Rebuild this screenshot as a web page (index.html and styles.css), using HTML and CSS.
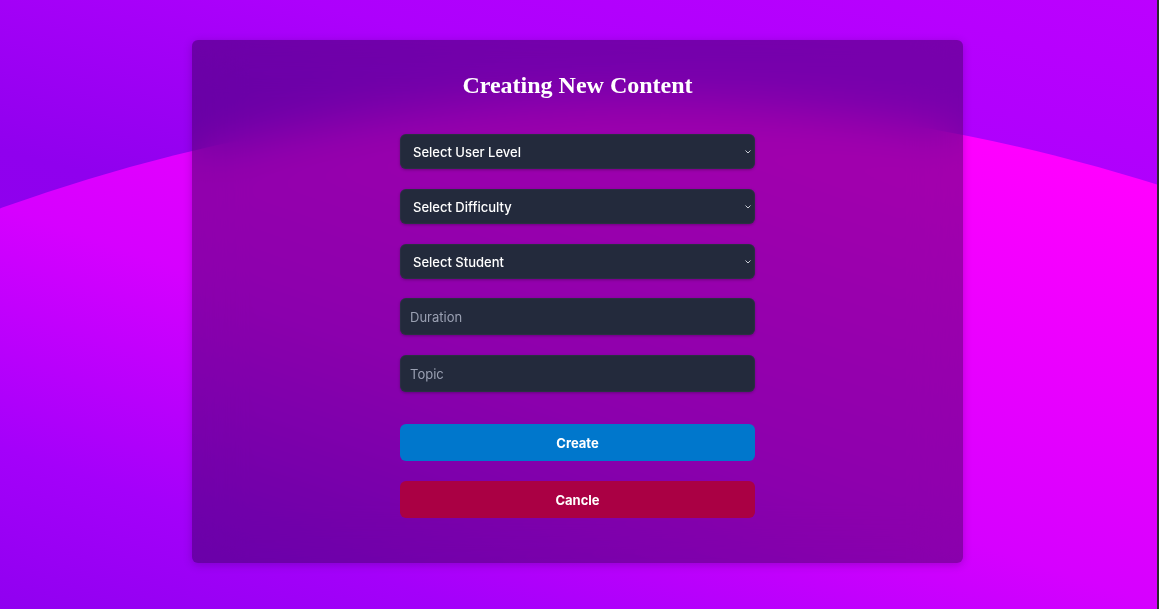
FILE: index.html
```html
<!DOCTYPE html>
<html lang="en">
<head>
<meta charset="utf-8">
<title>Creating New Content</title>
<link rel="stylesheet" href="styles.css">
</head>
<body>
<main class="page">
  <section class="card">
    <h1 class="title">Creating New Content</h1>
    <form class="form">
      <div class="select-wrap">
        <select class="field select"><option>Select User Level</option></select>
        <svg class="chev" width="8" height="6" viewBox="0 0 8 6"><path d="M1.5 1.5 L4 4 L6.5 1.5" fill="none" stroke="#c9ccd6" stroke-width="1"/></svg>
      </div>
      <div class="select-wrap">
        <select class="field select"><option>Select Difficulty</option></select>
        <svg class="chev" width="8" height="6" viewBox="0 0 8 6"><path d="M1.5 1.5 L4 4 L6.5 1.5" fill="none" stroke="#c9ccd6" stroke-width="1"/></svg>
      </div>
      <div class="select-wrap">
        <select class="field select"><option>Select Student</option></select>
        <svg class="chev" width="8" height="6" viewBox="0 0 8 6"><path d="M1.5 1.5 L4 4 L6.5 1.5" fill="none" stroke="#c9ccd6" stroke-width="1"/></svg>
      </div>
      <input class="field input first-input" type="text" placeholder="Duration">
      <input class="field input" type="text" placeholder="Topic">
      <button type="button" class="btn btn-create">Create</button>
      <button type="button" class="btn btn-cancel">Cancle</button>
    </form>
  </section>
</main>
</body>
</html>
```
FILE: styles.css
```css
* { box-sizing: border-box; }
html {
  margin: 0;
  padding: 0;
  background: #2a2a2e;
  height: 100%;
  overflow: hidden;
}
body {
  margin: 0 2px 0 0;
  padding: 0;
  height: 609px;
  font-family: Inter, "Noto Sans", sans-serif;
  background: linear-gradient(195deg, #bc00ff 0%, #ad00fc 25%, #9000ee 50%, #8800ea 100%);
  position: relative;
  overflow: hidden;
}
body::before {
  content: "";
  position: absolute;
  inset: 0;
  background: linear-gradient(199deg, #ff00ff 0%, #ff00ff 19%, #d600ff 60%, #a400fa 84%, #9000f0 100%);
  clip-path: circle(1809px at 614px 1910px);
  z-index: 0;
}
.page {
  position: relative;
  z-index: 1;
  width: 1155px;
  padding-top: 40px;
  display: flex;
  justify-content: center;
}
.card {
  width: 771px;
  height: 523px;
  border-radius: 6px;
  background: rgba(20, 0, 40, 0.38);
  backdrop-filter: blur(24px);
  -webkit-backdrop-filter: blur(24px);
  box-shadow: 0 2px 8px rgba(40, 0, 70, 0.25);
  padding-top: 29px;
  display: flex;
  flex-direction: column;
  align-items: center;
}
.title {
  margin: 0;
  font-family: "Liberation Serif", serif;
  font-weight: 700;
  font-size: 24px;
  line-height: 32px;
  color: #fff;
}
.form {
  width: 355px;
  margin-top: 33px;
  display: flex;
  flex-direction: column;
}
.select-wrap {
  position: relative;
  margin-bottom: 20px;
}
.field {
  display: block;
  width: 100%;
  border: none;
  outline: none;
  border-radius: 6px;
  background: #232a3c;
  box-shadow: 0 1px 3px rgba(0, 0, 0, 0.28), inset 0 0 0 1px rgba(255,255,255,0.03);
  font-family: Inter, "Noto Sans", sans-serif;
  font-size: 13px;
  color: #fff;
}
.select {
  -webkit-appearance: none;
  appearance: none;
  height: 35px;
  padding: 0 13px;
  font-weight: 500;
}
.chev {
  position: absolute;
  right: 3px;
  top: 15px;
}
.first-input { margin-top: -1px; }
.input {
  height: 37px;
  padding: 0 10px;
  margin-bottom: 20px;
}
.input::placeholder { color: #9aa0b2; }
.btn {
  display: block;
  width: 100%;
  height: 37px;
  border: none;
  border-radius: 6px;
  color: #fff;
  font-family: Inter, "Noto Sans", sans-serif;
  font-size: 13px;
  font-weight: 700;
}
.btn-create {
  margin-top: 12px;
  background: #0077cc;
}
.btn-cancel {
  margin-top: 20px;
  background: #aa0044;
}
```
